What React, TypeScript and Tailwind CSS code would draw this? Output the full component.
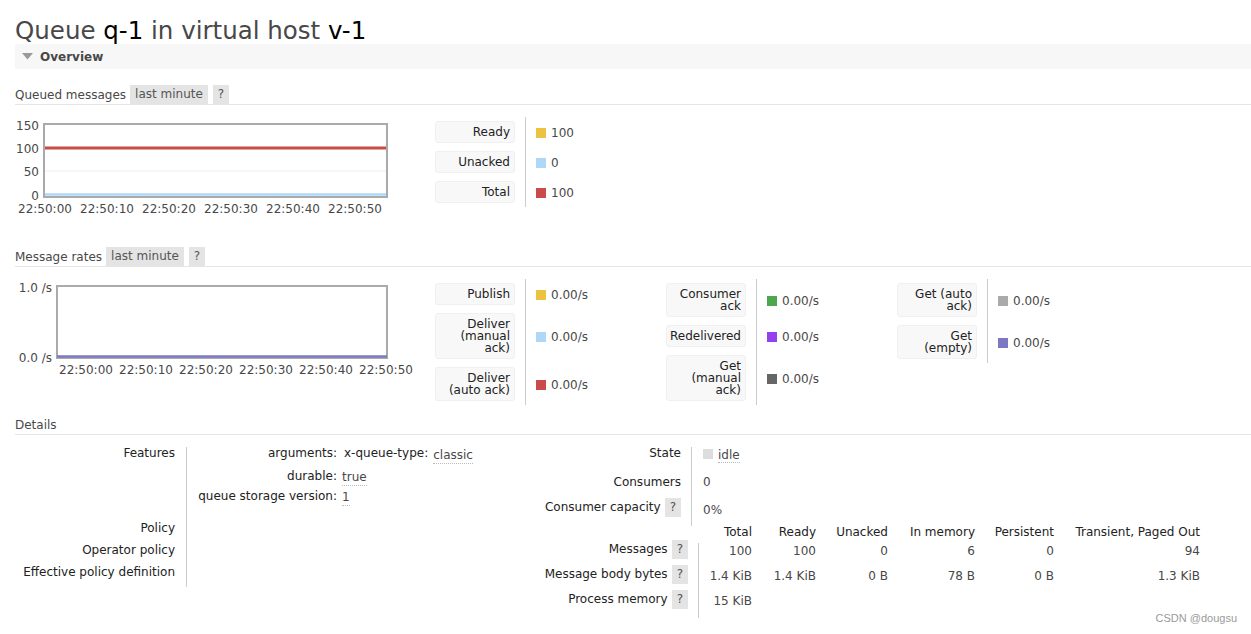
import React from "react";

const TH = "text-[#222]";

function Badge({ children, className = "" }: { children: React.ReactNode; className?: string }) {
  return (
    <span className={"inline-block h-[19px] leading-[19px] px-[5px] bg-[#e4e4e4] text-[#555] " + className}>{children}</span>
  );
}

function SectionHeader({ title, badges = true, className = "" }: { title: string; badges?: boolean; className?: string }) {
  return (
    <div className={"flex items-center h-[20px] border-b border-[#e6e6e6] text-[#484848] " + className}>
      <span>{title}</span>
      {badges && (
        <>
          <Badge className="ml-[4px]">last minute</Badge>
          <Badge className="ml-[5px]">?</Badge>
        </>
      )}
    </div>
  );
}

type LRow = { lines: string[]; color: string; value: string };

function LegendTable({ rows }: { rows: LRow[] }) {
  return (
    <div className="w-[231px] flex flex-col shrink-0">
      {rows.map((r, i) => (
        <div key={i} className="flex">
          <div className="w-[90px] pr-[10px] py-[4px] shrink-0">
            <div className={"w-[80px] bg-[#f8f8f8] border border-[#f0f0f0] rounded-[3px] text-right pr-[4px] py-[4px] leading-[12px] " + TH}>
              {r.lines.map((l, j) => (
                <div key={j}>{l}</div>
              ))}
            </div>
          </div>
          <div className="flex items-center border-l border-[#ccc] pl-[10px] pt-[1px] text-[#484848]">
            <span className="inline-block w-[10px] h-[10px] mr-[5px]" style={{ backgroundColor: r.color }} />
            <span>{r.value}</span>
          </div>
        </div>
      ))}
    </div>
  );
}

function Chart1() {
  const xs = [3, 65, 127, 189, 251, 313];
  const labels = ["22:50:00", "22:50:10", "22:50:20", "22:50:30", "22:50:40", "22:50:50"];
  return (
    <svg width="420" height="100" className="shrink-0" fontFamily="DejaVu Sans, Verdana, sans-serif" fontSize="12">
      <line x1="29" y1="54" x2="371" y2="54" stroke="#eeeeee" strokeWidth="1" />
      <line x1="29" y1="31" x2="371" y2="31" stroke="#cb4b4b" strokeWidth="3" />
      <line x1="29" y1="77.5" x2="371" y2="77.5" stroke="#afd8f8" strokeWidth="2.5" />
      <rect x="29" y="7" width="343" height="73" fill="none" stroke="#aaaaaa" strokeWidth="2" />
      <g fill="#484848" textAnchor="end">
        <text x="24" y="12.5">150</text>
        <text x="24" y="35.5">100</text>
        <text x="24" y="58.5">50</text>
        <text x="24" y="82.5">0</text>
      </g>
      <g fill="#484848">
        {xs.map((x, i) => (
          <text key={i} x={x} y="95.5">{labels[i]}</text>
        ))}
      </g>
    </svg>
  );
}

function Chart2() {
  const xs = [44, 104, 164, 224, 284, 344];
  const labels = ["22:50:00", "22:50:10", "22:50:20", "22:50:30", "22:50:40", "22:50:50"];
  return (
    <svg width="420" height="100" className="shrink-0" fontFamily="DejaVu Sans, Verdana, sans-serif" fontSize="12">
      <rect x="42" y="7" width="330" height="72" fill="none" stroke="#aaaaaa" strokeWidth="2" />
      <line x1="42" y1="77.5" x2="372" y2="77.5" stroke="#7c79c2" strokeWidth="2.5" />
      <g fill="#484848" textAnchor="end">
        <text x="37" y="12.5">1.0 /s</text>
        <text x="37" y="82.5">0.0 /s</text>
      </g>
      <g fill="#484848">
        {xs.map((x, i) => (
          <text key={i} x={x} y="94.5">{labels[i]}</text>
        ))}
      </g>
    </svg>
  );
}

function Dotted({ children }: { children: React.ReactNode }) {
  return <span className="border-b border-dotted border-[#bbb] pb-[1px]">{children}</span>;
}

export default function App() {
  const queued: LRow[] = [
    { lines: ["Ready"], color: "#edc240", value: "100" },
    { lines: ["Unacked"], color: "#afd8f8", value: "0" },
    { lines: ["Total"], color: "#cb4b4b", value: "100" },
  ];
  const rates1: LRow[] = [
    { lines: ["Publish"], color: "#edc240", value: "0.00/s" },
    { lines: ["Deliver", "(manual", "ack)"], color: "#afd8f8", value: "0.00/s" },
    { lines: ["Deliver", "(auto ack)"], color: "#cb4b4b", value: "0.00/s" },
  ];
  const rates2: LRow[] = [
    { lines: ["Consumer", "ack"], color: "#4da74d", value: "0.00/s" },
    { lines: ["Redelivered"], color: "#9440ed", value: "0.00/s" },
    { lines: ["Get", "(manual", "ack)"], color: "#666666", value: "0.00/s" },
  ];
  const rates3: LRow[] = [
    { lines: ["Get (auto", "ack)"], color: "#aaaaaa", value: "0.00/s" },
    { lines: ["Get", "(empty)"], color: "#7c79c2", value: "0.00/s" },
  ];

  const colW = ["w-[53px]", "w-[64px]", "w-[72px]", "w-[87px]", "w-[79px]", "w-[146px]"];
  const heads = ["Total", "Ready", "Unacked", "In memory", "Persistent", "Transient, Paged Out"];
  const msgRows = [
    ["100", "100", "0", "6", "0", "94"],
    ["1.4 KiB", "1.4 KiB", "0 B", "78 B", "0 B", "1.3 KiB"],
    ["15 KiB", "", "", "", "", ""],
  ];
  const msgLabels = ["Messages", "Message body bytes", "Process memory"];

  return (
    <div className="relative w-[1251px] h-[634px] overflow-hidden bg-white pl-[15px] font-['DejaVu_Sans',Verdana,sans-serif] text-[12px] leading-[14px] text-[#484848]">
      <h1 className="mt-[17px] text-[24.5px] leading-[27px] text-[#484848] font-normal">
        Queue <span className="text-black">q-1</span> in virtual host <span className="text-black">v-1</span>
      </h1>

      <div className="h-[25px] bg-[#f7f7f7] flex items-center">
        <svg width="11" height="7" className="ml-[7px]" viewBox="0 0 11 7">
          <polygon points="0,0 11,0 5.5,6.5" fill="#999999" />
        </svg>
        <span className="ml-[7px] font-bold text-[#484848]">Overview</span>
      </div>

      <SectionHeader title="Queued messages" className="mt-[16px]" />
      <div className="mt-[12px] flex h-[100px]">
        <Chart1 />
        <LegendTable rows={queued} />
      </div>

      <SectionHeader title="Message rates" className="mt-[30px]" />
      <div className="mt-[12px] flex items-start">
        <Chart2 />
        <LegendTable rows={rates1} />
        <LegendTable rows={rates2} />
        <LegendTable rows={rates3} />
      </div>

      <SectionHeader title="Details" badges={false} className="mt-[10px]" />

      <div className="mt-[12px] flex leading-[12px]">
        {/* left block */}
        <div className="w-[485px] flex shrink-0">
          <div className={"w-[171px] pr-[11px] text-right shrink-0 " + TH}>
            <div className="h-[71px]">Features</div>
            <div className="h-[22px] pt-[4px]">Policy</div>
            <div className="h-[22px] pt-[4px]">Operator policy</div>
            <div className="h-[25px] pt-[4px]">Effective policy definition</div>
          </div>
          <div className="border-l border-[#ccc] h-[140px]">
            <div className="flex h-[23px]">
              <div className={"w-[150px] text-right " + TH}>arguments:</div>
              <div className={"ml-[7px] " + TH}>x-queue-type:</div>
              <div className="ml-[5px] mt-[2px]"><Dotted>classic</Dotted></div>
            </div>
            <div className="flex h-[20px]">
              <div className={"w-[150px] text-right " + TH}>durable:</div>
              <div className="ml-[5px] mt-[1px]"><Dotted>true</Dotted></div>
            </div>
            <div className="flex h-[20px]">
              <div className={"w-[150px] text-right " + TH}>queue storage version:</div>
              <div className="ml-[5px] mt-[1px]"><Dotted>1</Dotted></div>
            </div>
          </div>
        </div>

        {/* right block */}
        <div className="flex flex-col">
          <div className="flex">
            <div className={"w-[181px] text-right shrink-0 " + TH}>
              <div className="h-[27px]">State</div>
              <div className="h-[24px] pt-[2px]">Consumers</div>
              <div className="h-[28px] flex justify-end items-start">
                <span className="leading-[19px]">Consumer capacity</span>
                <Badge className="ml-[4px] text-[#333]">?</Badge>
              </div>
            </div>
            <div className="ml-[10px] border-l border-[#ccc] pl-[11px] h-[79px]">
              <div className="h-[27px] flex items-start pt-[2px]">
                <span className="inline-block w-[10px] h-[10px] bg-[#dddddd] mr-[5px]" />
                <Dotted>idle</Dotted>
              </div>
              <div className="h-[24px] pt-[2px]">0</div>
              <div className="h-[28px] pt-[6px]">0%</div>
            </div>
          </div>

          <div className="flex h-[13px]">
            <div className="w-[199px] shrink-0" />
            {heads.map((h, i) => (
              <div key={i} className={colW[i] + " text-right shrink-0 " + TH}>{h}</div>
            ))}
          </div>

          <div className="flex">
            <div className={"w-[188px] shrink-0 text-right " + TH}>
              {msgLabels.map((l, i) => (
                <div key={i} className="h-[25px] pt-[1px] flex justify-end items-start">
                  <span className="leading-[19px]">{l}</span>
                  <Badge className="ml-[4px] text-[#333]">?</Badge>
                </div>
              ))}
            </div>
            <div className="ml-[10px] mt-[4px] border-l border-[#ccc]">
              {msgRows.map((row, r) => (
                <div key={r} className="flex h-[25px] pt-[2px]">
                  {row.map((v, i) => (
                    <div key={i} className={colW[i] + " text-right shrink-0"}>{v}</div>
                  ))}
                </div>
              ))}
            </div>
          </div>
        </div>
      </div>

      <div className="absolute right-[14px] top-[611px] text-[11px] text-[#9a9a9a] font-['Liberation_Sans',Arial,sans-serif]">
        CSDN @dougsu
      </div>
    </div>
  );
}
